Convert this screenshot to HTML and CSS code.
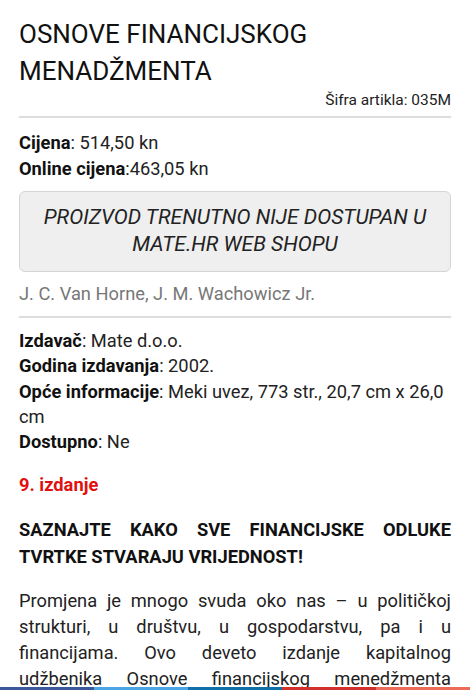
FILE: index.html
```html
<!DOCTYPE html>
<html lang="hr">
<head>
    <meta charset="UTF-8">
    <title>Osnove financijskog menadžmenta</title>
    <link rel="stylesheet" href="styles.css">
</head>
<body>

<div class="page">
    <div class="crumbs"><span>Osnove financijskog menadžmenta</span></div>

    <h1 class="title">OSNOVE FINANCIJSKOG MENADŽMENTA</h1>
    <div class="sku">Šifra artikla: 035M</div>

    <div class="prices">
        <p><b>Cijena</b>: 514,50 kn</p>
        <p><b>Online cijena</b>:463,05 kn</p>
    </div>

    <div class="notice">PROIZVOD TRENUTNO NIJE DOSTUPAN U MATE.HR WEB SHOPU</div>

    <div class="authors">J. C. Van Horne, J. M. Wachowicz Jr.</div>

    <ul class="info">
        <li><b>Izdavač</b>: Mate d.o.o.</li>
        <li><b>Godina izdavanja</b>: 2002.</li>
        <li><b>Opće informacije</b>: Meki uvez, 773 str., 20,7 cm x 26,0 cm</li>
        <li><b>Dostupno</b>: Ne</li>
    </ul>

    <div class="edition">9. izdanje</div>

    <h2 class="lead">SAZNAJTE KAKO SVE FINANCIJSKE ODLUKE TVRTKE STVARAJU VRIJEDNOST!</h2>

    <p class="desc">Promjena je mnogo svuda oko nas – u političkoj strukturi, u društvu, u gospodarstvu, pa i u financijama. Ovo deveto izdanje kapitalnog udžbenika Osnove financijskog menedžmenta (Fundamentals of Financial Management) pokazuje kako se financijske odluke donose u stvarnom poslovnom okruženju.</p>
</div>

<div class="share">
    <a class="fb" href="javascript:void(0);"></a>
    <a class="tw" href="javascript:void(0);"></a>
    <a class="li" href="javascript:void(0);"></a>
    <a class="gp" href="javascript:void(0);"></a>
    <a class="ml" href="javascript:void(0);"></a>
</div>

</body>
</html>
```

FILE: styles.css
```css
* {
    margin: 0;
    padding: 0;
}

body {
    font-family: Roboto, "Liberation Sans", sans-serif;
    color: #222;
    background: #fff;
}

.page {
    padding: 0 19px;
}

/* od putanje se vidi samo donji rub zadnjeg retka */
.crumbs {
    height: 3px;
    overflow: hidden;
    display: flex;
    flex-direction: column;
    justify-content: flex-end;
    align-items: flex-end;
    padding-right: 13px;
}

.crumbs span {
    width: 200px;
    font-size: 15px;
    line-height: 20px;
    text-align: right;
    text-transform: uppercase;
    color: #aaa;
}

.title {
    margin-top: 13px;
    font-size: 26px;
    font-weight: normal;
    line-height: 37px;
    color: #111;
}

.sku {
    text-align: right;
    font-size: 15.5px;
    line-height: 20px;
    color: #222;
    padding-bottom: 6px;
    border-bottom: 2px solid #ddd;
}

.prices {
    margin-top: 12px;
    font-size: 18.3px;
    line-height: 26px;
}

.prices b,
.info b {
    color: #111;
}

.notice {
    margin-top: 9px;
    padding: 12px 20px 13px;
    background-color: #efefef;
    border: 1px solid #d4d4d4;
    border-radius: 6px;
    font-size: 21px;
    font-style: italic;
    line-height: 27px;
    text-align: center;
    color: #222;
}

.authors {
    margin-top: 12px;
    padding-bottom: 12px;
    border-bottom: 2px solid #ddd;
    font-size: 18.3px;
    line-height: 20px;
    color: #777;
}

.info {
    list-style: none;
    margin-top: 10px;
    font-size: 18.3px;
    line-height: 25.3px;
}

.edition {
    margin-top: 19px;
    font-size: 18.3px;
    font-weight: bold;
    line-height: 24px;
    color: #e01010;
}

.lead {
    margin-top: 19px;
    font-size: 18.3px;
    font-weight: bold;
    line-height: 27px;
    text-align: justify;
    color: #111;
}

.desc {
    margin-top: 18px;
    font-size: 18.3px;
    line-height: 26px;
    text-align: justify;
}

.share {
    position: fixed;
    left: 0;
    right: 0;
    bottom: 0;
    height: 3px;
    display: flex;
}

.share a {
    flex: 1;
}

.share .fb {
    background-color: #3b5998;
}

.share .tw {
    background-color: #4aa6e4;
}

.share .li {
    background-color: #1270a8;
}

.share .gp {
    background-color: #d1312c;
}

.share .ml {
    background-color: #ea6b5a;
}
```
